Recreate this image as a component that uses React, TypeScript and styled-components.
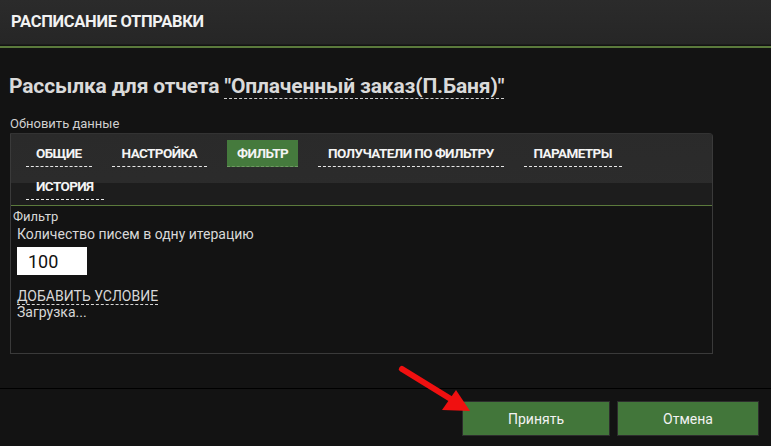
import React from "react";
import styled, { createGlobalStyle } from "styled-components";

const GlobalStyle = createGlobalStyle`
  html, body {
    margin: 0;
    padding: 0;
    background: #131313;
    font-family: Roboto, "Liberation Sans", sans-serif;
  }
`;

const Window = styled.div`
  position: relative;
  width: 771px;
  height: 446px;
  background: #131313;
  color: #dcdcdc;
  display: flex;
  flex-direction: column;
  overflow: hidden;
`;

const Header = styled.div`
  height: 45px;
  background: linear-gradient(180deg, #2b2b2b 0%, #262626 100%);
  border-bottom: 1px solid #1c1c1c;
  display: flex;
  align-items: center;
  padding-left: 11px;
  padding-bottom: 1px;
  box-sizing: border-box;
  font-size: 16.5px;
  font-weight: 700;
  color: #f2f2f2;
  letter-spacing: -0.3px;
`;

const GreenRule = styled.div`
  height: 2px;
  background: #5b7a3c;
  margin-top: 1px;
`;

const Body = styled.div`
  padding: 24px 58px 0 9px;
  display: flex;
  flex-direction: column;
`;

const Title = styled.h1`
  margin: 0;
  font-size: 21px;
  font-weight: 700;
  color: #dadada;
  line-height: 28px;
  letter-spacing: -0.15px;
`;

const Dashed = styled.span`
  border-bottom: 1px dashed #cfcfcf;
`;

const Refresh = styled.div`
  font-size: 13px;
  color: #d0d0d0;
  margin-top: 16px;
  margin-left: 1px;
  line-height: 15px;
`;

const Panel = styled.div`
  margin: 2px 0 0 1px;
  height: 219px;
  border: 1px solid #3a3a3a;
  border-top-color: #333;
  border-radius: 0 4px 0 0;
  background: #131313;
  display: flex;
  flex-direction: column;
`;

const TabBar = styled.div`
  position: relative;
  background: linear-gradient(178deg, #2a2a2a 0%, #2c2c2c 100%);
  padding: 6px 70px 5px 15px;
  display: flex;
  flex-wrap: wrap;
  row-gap: 6px;
  column-gap: 20px;
  border-bottom: 1px solid #5b7a3c;
  &::after {
    content: "";
    position: absolute;
    left: 0;
    right: 0;
    bottom: 0;
    height: 22px;
    background: #1d1d1d;
  }
`;

const Tab = styled.div<{ $active?: boolean }>`
  position: relative;
  z-index: 1;
  height: 27px;
  box-sizing: border-box;
  padding: 0 10px;
  display: flex;
  align-items: center;
  font-size: 13.5px;
  font-weight: 700;
  letter-spacing: -0.6px;
  color: #f4f4f4;
  border-bottom: 1px dashed;
  background: ${(p) => (p.$active ? "#457a3d" : "transparent")};
  border-bottom-color: ${(p) => (p.$active ? "#6f9a63" : "#e8e8e8")};
`;

const Content = styled.div`
  padding: 3px 0 0 2px;
  display: flex;
  flex-direction: column;
`;

const SectionLabel = styled.div`
  font-size: 13px;
  color: #d8d8d8;
  line-height: 15px;
`;

const Field = styled.div`
  padding-left: 4px;
  display: flex;
  flex-direction: column;
  align-items: flex-start;
`;

const FieldLabel = styled.div`
  margin-top: 2px;
  font-size: 14px;
  color: #d8d8d8;
  line-height: 17px;
`;

const NumberBox = styled.div`
  margin-top: 4px;
  width: 70px;
  height: 28px;
  background: #fff;
  color: #111;
  font-size: 18px;
  display: flex;
  align-items: center;
  padding-left: 11px;
  box-sizing: border-box;
`;

const AddLink = styled.div`
  margin-top: 13px;
  font-size: 14px;
  color: #d8d8d8;
  line-height: 16px;
  border-bottom: 1px dashed #d8d8d8;
`;

const Loading = styled.div`
  font-size: 14px;
  color: #d8d8d8;
  line-height: 15px;
`;

const Footer = styled.div`
  margin-top: 34px;
  border-top: 1px solid #000;
  padding: 12px 12px 0 0;
  display: flex;
  justify-content: flex-end;
  gap: 7px;
  flex: 1;
`;

const Button = styled.button`
  width: 148px;
  height: 35px;
  background: #42763a;
  border: 1px solid #2d2d2d;
  color: #f2f2f2;
  font-family: Roboto, "Liberation Sans", sans-serif;
  font-size: 14px;
  cursor: pointer;
  & + & {
    width: 142px;
  }
`;

const Arrow = styled.svg`
  position: absolute;
  left: 398px;
  top: 364px;
`;

export default function App() {
  const tabs = [
    "ОБЩИЕ",
    "НАСТРОЙКА",
    "ФИЛЬТР",
    "ПОЛУЧАТЕЛИ ПО ФИЛЬТРУ",
    "ПАРАМЕТРЫ",
    "ИСТОРИЯ",
  ];
  return (
    <>
      <GlobalStyle />
      <Window>
        <Header>РАСПИСАНИЕ ОТПРАВКИ</Header>
        <GreenRule />
        <Body>
          <Title>
            Рассылка для отчета <Dashed>"Оплаченный заказ(П.Баня)"</Dashed>
          </Title>
          <Refresh>Обновить данные</Refresh>
          <Panel>
            <TabBar>
              {tabs.map((t) => (
                <Tab key={t} $active={t === "ФИЛЬТР"}>
                  {t}
                </Tab>
              ))}
            </TabBar>
            <Content>
              <SectionLabel>Фильтр</SectionLabel>
              <Field>
                <FieldLabel>Количество писем в одну итерацию</FieldLabel>
                <NumberBox>100</NumberBox>
                <AddLink>ДОБАВИТЬ УСЛОВИЕ</AddLink>
                <Loading>Загрузка...</Loading>
              </Field>
            </Content>
          </Panel>
        </Body>
        <Footer>
          <Button>Принять</Button>
          <Button>Отмена</Button>
        </Footer>
        <Arrow width="80" height="56" viewBox="0 0 80 56">
          <line x1="4" y1="5" x2="56" y2="37" stroke="#f01010" strokeWidth="6" strokeLinecap="round" />
          <polygon points="72,47 44,46 58,26" fill="#f01010" />
        </Arrow>
      </Window>
    </>
  );
}
